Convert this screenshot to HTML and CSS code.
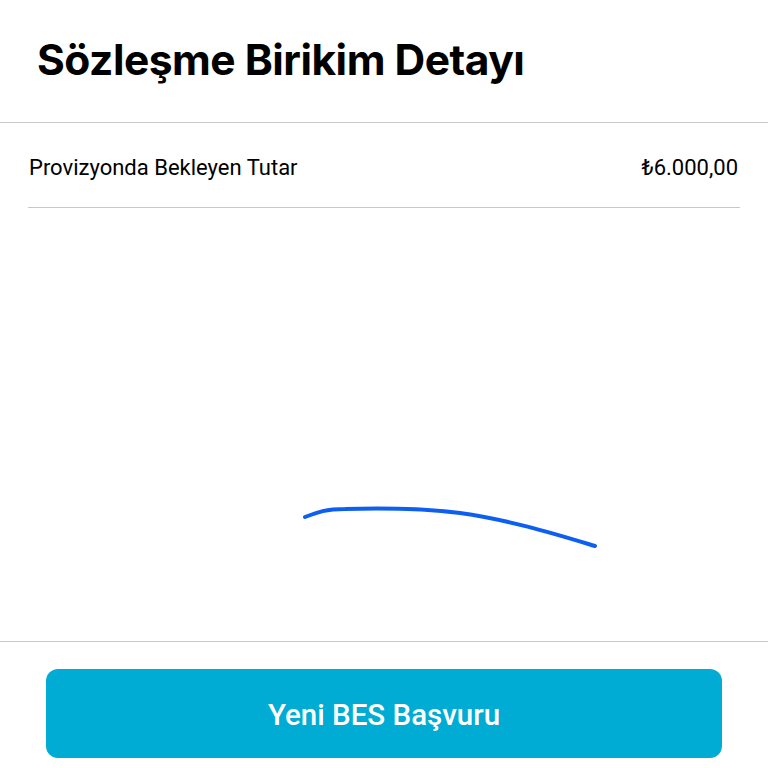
FILE: index.html
```html
<!DOCTYPE html>
<html lang="tr">
<head>
  <meta charset="UTF-8" />
  <meta name="viewport" content="width=device-width, initial-scale=1.0" />
  <title>Sözleşme Birikim Detayı</title>
  <link rel="stylesheet" href="styles.css">
</head>
<body>
  <header class="page-header">
    <h1>Sözleşme Birikim Detayı</h1>
  </header>
  <main>
    <div class="detail-row">
      <span class="detail-label">Provizyonda Bekleyen Tutar</span>
      <span class="detail-value">₺6.000,00</span>
    </div>
    <div class="chart">
      <svg width="768" height="433" viewBox="0 0 768 433">
        <path d="M305 309 C 318 304, 326 301, 345 301 C 380 300, 420 300, 460 305 C 510 312, 555 326, 595 338" fill="none" stroke="#0d5ff2" stroke-width="4" stroke-linecap="round" />
      </svg>
    </div>
  </main>
  <footer class="page-footer">
    <button type="button" class="primary-btn">Yeni BES Başvuru</button>
  </footer>
</body>
</html>
```

FILE: styles.css
```css
body {
  margin: 0;
  background-color: white;
  font-family: Inter, "Noto Sans", sans-serif;
  color: #000;
}
.page-header {
  height: 122px;
  border-bottom: 1px solid #c8c8c8;
}
.page-header h1 {
  margin: 0;
  padding: 34px 0 0 37px;
  font-size: 42.5px;
  font-weight: 700;
  letter-spacing: -0.5px;
  line-height: 52px;
}
.detail-row {
  margin: 0 28px;
  height: 85px;
  border-bottom: 1px solid #c8c8c8;
  display: flex;
  justify-content: space-between;
  align-items: center;
  font-family: Roboto, sans-serif;
  font-size: 22px;
  padding: 4px 2px 0 1px;
  box-sizing: border-box;
}
.chart {
  height: 433px;
  border-bottom: 1px solid #c8c8c8;
}
.chart svg {
  display: block;
}
.page-footer {
  padding: 27px 46px 0;
}
.primary-btn {
  width: 100%;
  height: 89px;
  border: none;
  border-radius: 12px;
  background-color: #00acd3;
  color: white;
  font-family: Roboto, sans-serif;
  font-size: 29.5px;
  font-weight: 500;
  padding-top: 3px;
  cursor: pointer;
}
```
